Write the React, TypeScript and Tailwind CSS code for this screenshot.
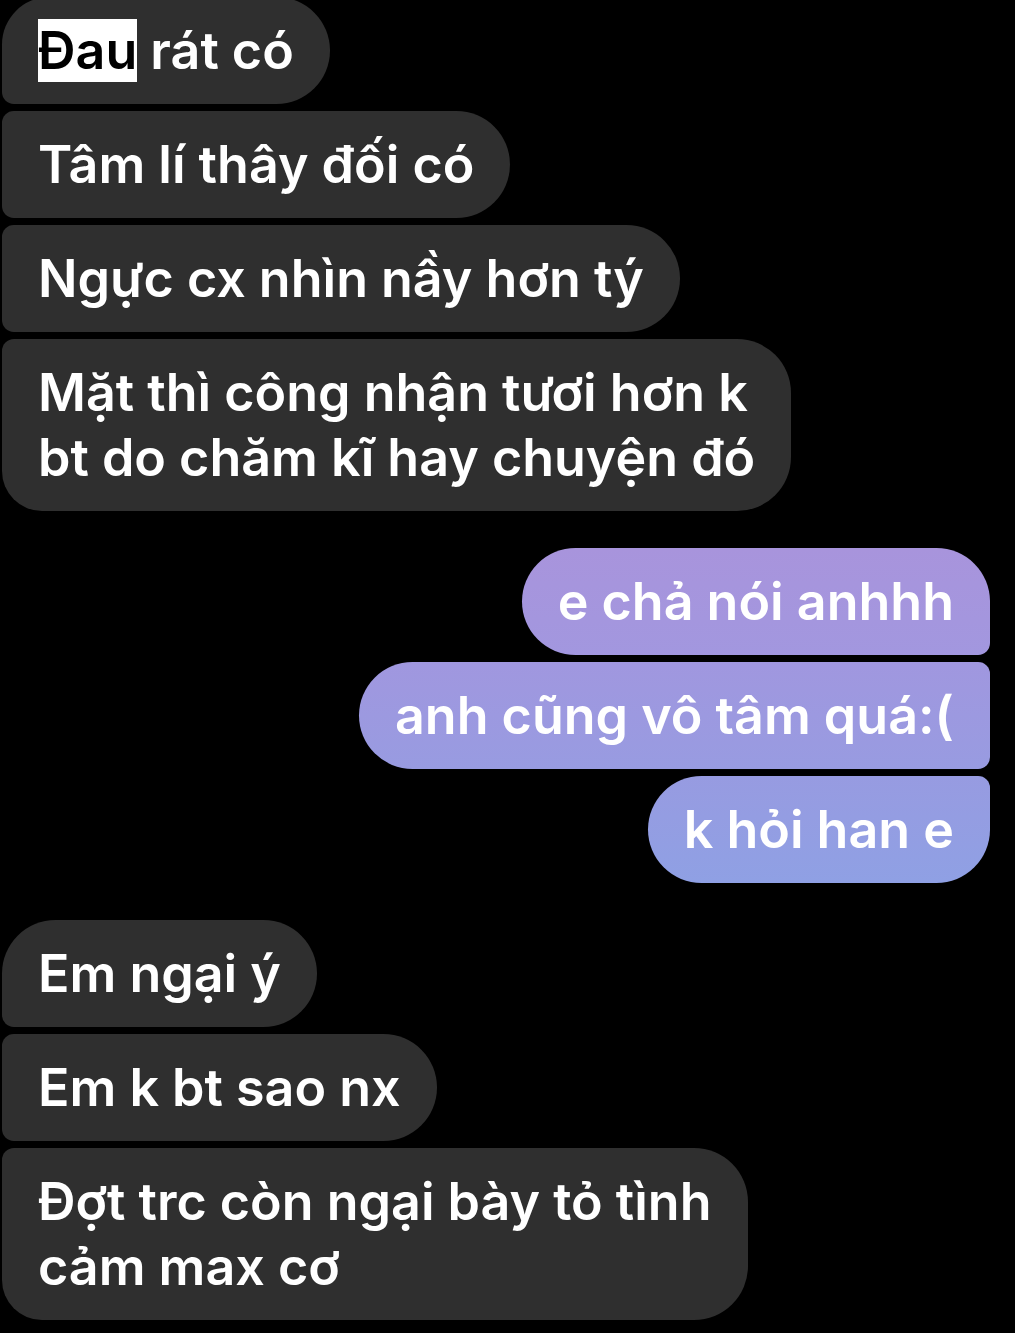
const font = { fontFamily: "Inter, 'Noto Sans', sans-serif" };

type Msg = { text: React.ReactNode; shape: string; bg?: string };

const leftTop: Msg[] = [
  {
    text: (
      <>
        <span className="bg-white text-black">Đau</span> rát có
      </>
    ),
    shape: "rounded-tl-[48px] rounded-bl-[12px] rounded-r-[54px]",
  },
  { text: "Tâm lí thây đối có", shape: "rounded-l-[12px] rounded-r-[54px]" },
  { text: "Ngực cx nhìn nầy hơn tý", shape: "rounded-l-[12px] rounded-r-[54px]" },
  {
    text: (
      <>
        Mặt thì công nhận tươi hơn k
        <br />
        bt do chăm kĩ hay chuyện đó
      </>
    ),
    shape: "rounded-tl-[12px] rounded-bl-[40px] rounded-r-[54px]",
  },
];

const mine: Msg[] = [
  {
    text: "e chả nói anhhh",
    shape: "rounded-l-[54px] rounded-tr-[54px] rounded-br-[12px]",
    bg: "bg-gradient-to-b from-[#a894dc] to-[#a297df]",
  },
  {
    text: "anh cũng vô tâm quá:(",
    shape: "rounded-l-[54px] rounded-r-[12px]",
    bg: "bg-gradient-to-b from-[#a097df] to-[#989be1]",
  },
  {
    text: "k hỏi han e",
    shape: "rounded-l-[54px] rounded-tr-[12px] rounded-br-[54px]",
    bg: "bg-gradient-to-b from-[#979be1] to-[#8fa0e4]",
  },
];

const leftBottom: Msg[] = [
  { text: "Em ngại ý", shape: "rounded-tl-[54px] rounded-bl-[12px] rounded-r-[54px]" },
  { text: "Em k bt sao nx", shape: "rounded-l-[12px] rounded-r-[54px]" },
  {
    text: (
      <>
        Đợt trc còn ngại bày tỏ tình
        <br />
        cảm max cơ
      </>
    ),
    shape: "rounded-tl-[12px] rounded-bl-[40px] rounded-r-[54px]",
  },
];

function Bubble({ msg, right }: { msg: Msg; right?: boolean }) {
  return (
    <div
      className={`w-fit px-[36px] py-[21px] text-[52px] font-semibold leading-[65px] text-white ${
        msg.shape
      } ${right ? "self-end text-right" : ""} ${msg.bg ?? "bg-[#2f2f2f]"}`}
      style={font}
    >
      {msg.text}
    </div>
  );
}

export default function App() {
  return (
    <div className="flex h-[1333px] w-[1015px] flex-col overflow-hidden bg-black pl-[2px] pr-[25px]">
      <div className="-mt-[3px] flex flex-col gap-[7px]">
        {leftTop.map((m, i) => (
          <Bubble key={i} msg={m} />
        ))}
      </div>
      <div className="mt-[37px] flex flex-col gap-[7px]">
        {mine.map((m, i) => (
          <Bubble key={i} msg={m} right />
        ))}
      </div>
      <div className="mt-[37px] flex flex-col gap-[7px]">
        {leftBottom.map((m, i) => (
          <Bubble key={i} msg={m} />
        ))}
      </div>
    </div>
  );
}
